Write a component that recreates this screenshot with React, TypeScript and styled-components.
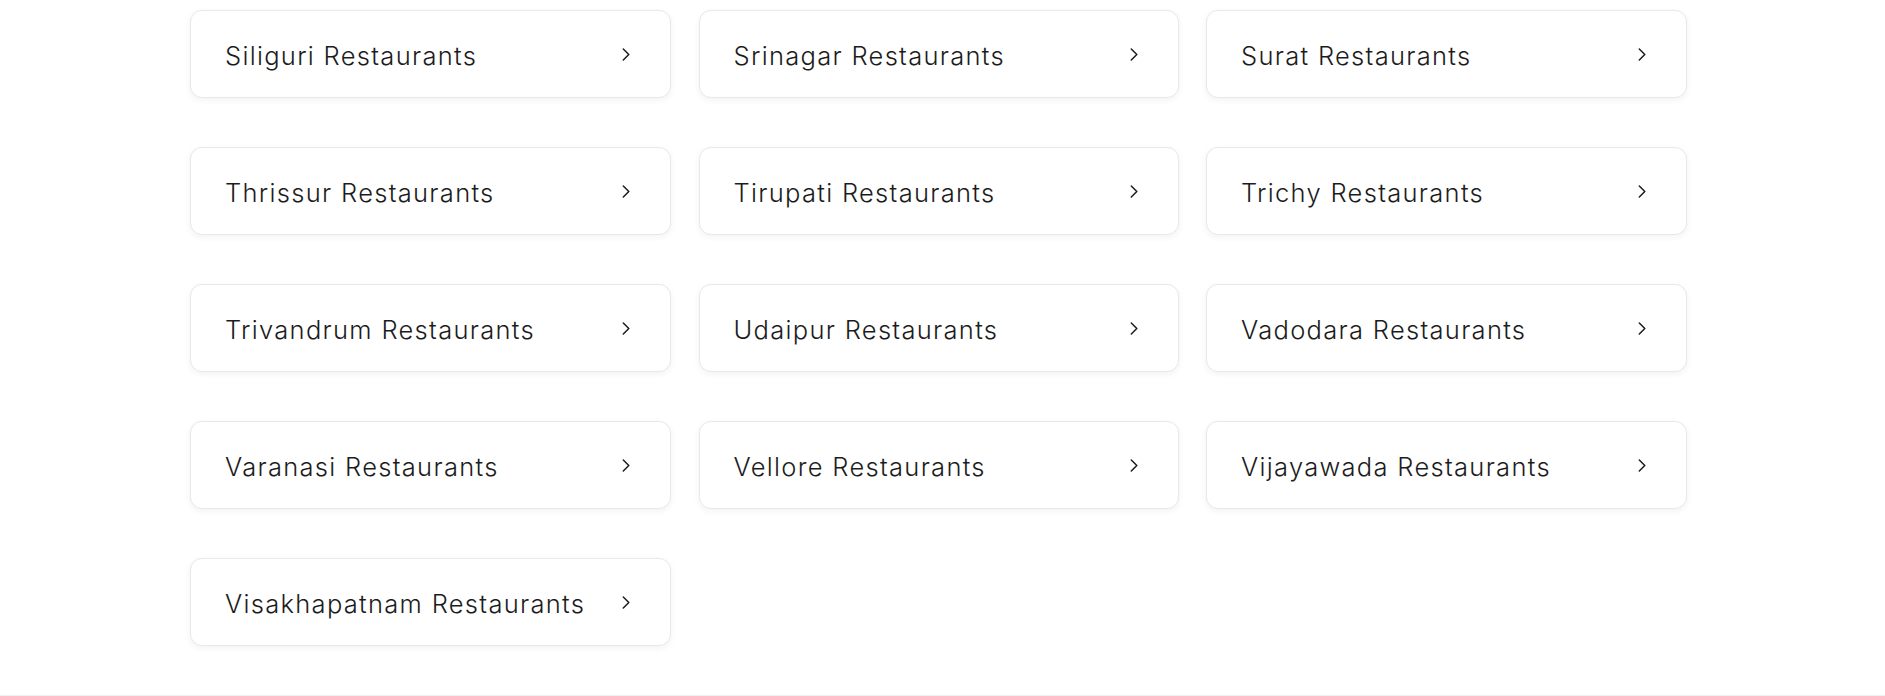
import React from "react";
import styled, { createGlobalStyle } from "styled-components";

const Global = createGlobalStyle`
  html, body { margin: 0; padding: 0; background: #ffffff; }
  body { font-family: "Inter", "Noto Sans", sans-serif; color: #1c1c1c; }
`;

const Page = styled.div`
  display: flex;
  flex-direction: column;
  min-height: 696px;
`;

const Grid = styled.div`
  display: grid;
  grid-template-columns: 481px 480px 481px;
  column-gap: 27.5px;
  row-gap: 49px;
  margin: 10px 0 49px 190px;
`;

const Card = styled.a`
  box-sizing: border-box;
  height: 88px;
  display: flex;
  align-items: center;
  justify-content: space-between;
  padding: 0 40px 0 34px;
  background: #ffffff;
  border: 1px solid #e8e8e8;
  border-radius: 12px;
  box-shadow: rgba(28, 28, 28, 0.06) 0px 2px 6px;
  text-decoration: none;
  color: #1c1c1c;
  cursor: pointer;
`;

const Label = styled.span`
  font-family: "Inter", "Noto Sans", sans-serif;
  font-size: 25.5px;
  font-weight: 300;
  letter-spacing: 1.3px;
  color: #1c1c1c;
  white-space: nowrap;
  padding-top: 3px;
`;

const Footer = styled.footer`
  flex: 1;
  border-top: 1px solid #f0f0f0;
  background: #f8f8f8;
`;

const Chevron = () => (
  <svg width="8" height="13" viewBox="0 0 8 13" fill="none">
    <polyline
      points="1.3,1 6.8,6.5 1.3,12"
      stroke="#1c1c1c"
      strokeWidth="1.5"
      strokeLinecap="round"
      strokeLinejoin="round"
    />
  </svg>
);

const cities = [
  "Siliguri",
  "Srinagar",
  "Surat",
  "Thrissur",
  "Tirupati",
  "Trichy",
  "Trivandrum",
  "Udaipur",
  "Vadodara",
  "Varanasi",
  "Vellore",
  "Vijayawada",
  "Visakhapatnam",
];

export default function App() {
  return (
    <>
      <Global />
      <Page>
        <Grid>
          {cities.map((c) => (
            <Card key={c}>
              <Label>{c} Restaurants</Label>
              <Chevron />
            </Card>
          ))}
        </Grid>
        <Footer />
      </Page>
    </>
  );
}
